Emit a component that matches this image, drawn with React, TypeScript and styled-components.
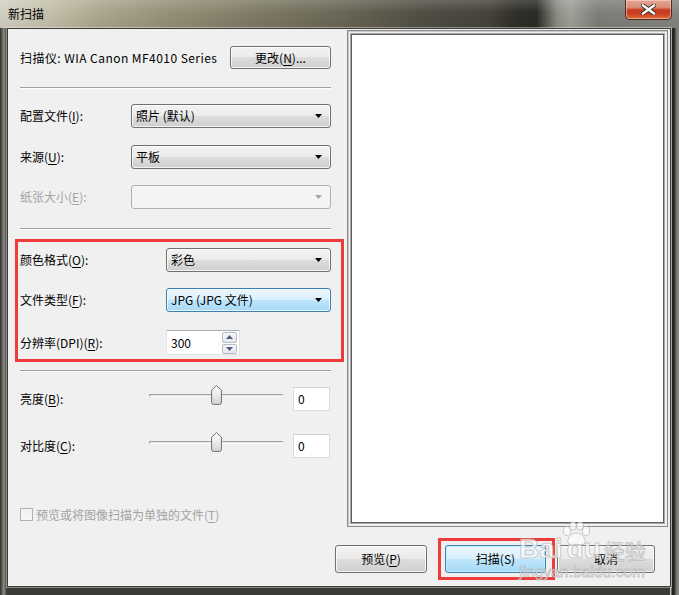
import React from "react";
import styled, { createGlobalStyle, css } from "styled-components";

const Global = createGlobalStyle`
  html, body { margin: 0; padding: 0; background: #ffffff; }
  body {
    font-family: "Noto Sans CJK SC", "Noto Sans", sans-serif;
    font-size: 12px;
    line-height: 16px;
    color: #000;
  }
  * { box-sizing: border-box; }
  u { text-decoration: underline; text-underline-offset: 2px; }
`;

const Window = styled.div`
  position: relative;
  width: 679px;
  height: 595px;
  display: flex;
  flex-direction: column;
  padding: 0 8px 8px 7px;
  overflow: hidden;
  background:
    linear-gradient(90deg, #2c2c29 0px, #5f5e59 2px, #8d8c86 4px, #6c6b66 5px, #3a3935 7px) left top / 7px 100% no-repeat,
    linear-gradient(90deg, #d0d0cd 0px, #b5b5b2 1px, #262624 2px, #1c1c1a 4px, #6d6d6a 6px, #8e8e8b 9px) right top / 9px 100% no-repeat,
    linear-gradient(180deg, #5a5955 0%, #3b3a36 100%);
`;

const TitleBar = styled.div`
  height: 28px;
  margin: 0 -8px 0 -7px;
  padding: 0 7px 0 8px;
  display: flex;
  justify-content: space-between;
  align-items: flex-start;
  flex: none;
  background:
    linear-gradient(180deg, rgba(255, 255, 255, 0.16) 0%, rgba(255, 255, 255, 0) 45%, rgba(0, 0, 0, 0.05) 100%),
    linear-gradient(90deg, #d3d0c2 0%, #c4c0ab 7%, #aba58d 15%, #948f77 25%, #7a7662 40%, #6b6756 50%, #514e44 62%, #45433a 72%, #2f2e28 76%, #2b2a25 79%, #8c8b84 82%, #a09f99 84%, #7e7d78 88%, #848480 100%);
`;

const Title = styled.span`
  margin-top: 6px;
  font-size: 12px;
  line-height: 16px;
  color: #000;
`;

const CloseButton = styled.div`
  width: 47px;
  height: 20px;
  display: flex;
  align-items: center;
  justify-content: center;
  border: 1px solid #4a2a22;
  border-top: none;
  border-radius: 0 0 5px 5px;
  background: linear-gradient(180deg, #e2a796 0%, #d88a74 40%, #c53c20 52%, #c8401f 72%, #e46a3a 100%);
  box-shadow: inset 0 0 0 1px rgba(255, 220, 200, 0.55);
`;

const Client = styled.div`
  flex: 1;
  display: flex;
  flex-direction: column;
  background: #f0f0f0;
  border: 1px solid #3a3a37;
  box-shadow: 0 0 0 1px rgba(255, 255, 255, 0.4);
`;

const Top = styled.div`
  display: flex;
  padding-top: 1px;
  height: 498px;
  flex: none;
`;

const LeftPanel = styled.div`
  width: 339px;
  flex: none;
  display: flex;
  flex-direction: column;
  padding: 0 16px 0 12px;
`;

const Row = styled.div<{ $mt: number; $h?: number }>`
  display: flex;
  align-items: center;
  margin-top: ${(p) => p.$mt}px;
  height: ${(p) => p.$h ?? 24}px;
  flex: none;
`;

const ScannerRow = styled(Row)`
  justify-content: space-between;
`;

const Label = styled.span<{ $w?: number; $disabled?: boolean }>`
  width: ${(p) => (p.$w ? `${p.$w}px` : "auto")};
  flex: none;
  white-space: nowrap;
  color: ${(p) => (p.$disabled ? "#a3a3a3" : "#000")};
`;

const ScannerLabel = styled(Label)`
  letter-spacing: 0.45px;
`;

const Separator = styled.div<{ $mt: number }>`
  margin-top: ${(p) => p.$mt}px;
  height: 2px;
  flex: none;
  border-top: 1px solid #a0a0a0;
  border-bottom: 1px solid #ffffff;
`;

const Highlight = styled.div`
  margin: 9px -13px 0 -5px;
  padding: 6px 10px 4px 2px;
  border: 3px solid #f03b3b;
  display: flex;
  flex-direction: column;
`;

const buttonBase = css`
  display: flex;
  align-items: center;
  justify-content: center;
  flex: none;
  border: 1px solid #707070;
  border-radius: 3px;
  background: linear-gradient(180deg, #f2f2f2 0%, #ebebeb 49%, #dddddd 50%, #cfcfcf 100%);
  box-shadow: inset 0 0 0 1px rgba(255, 255, 255, 0.75);
  color: #000;
  white-space: nowrap;
`;

const Button = styled.div<{ $w: number; $h: number; $default?: boolean }>`
  ${buttonBase};
  width: ${(p) => p.$w}px;
  height: ${(p) => p.$h}px;
  ${(p) =>
    p.$default &&
    css`
      border-color: #3c7fb1;
      background: linear-gradient(180deg, #eaf6fd 0%, #d9f0fc 49%, #bee6fd 50%, #a7d9f5 100%);
      box-shadow: inset 0 0 0 1px rgba(200, 238, 255, 0.9);
    `}
`;

type Variant = "normal" | "hot" | "disabled";

const ComboBox = styled.div<{ $variant: Variant }>`
  ${buttonBase};
  flex: 1;
  height: 24px;
  justify-content: space-between;
  padding: 0 8px 0 4px;
  ${(p) =>
    p.$variant === "hot" &&
    css`
      border-color: #3c7fb1;
      background: linear-gradient(180deg, #eaf6fd 0%, #d9f0fc 49%, #bee6fd 50%, #a7d9f5 100%);
    `}
  ${(p) =>
    p.$variant === "disabled" &&
    css`
      border-color: #adb2b5;
      background: #f4f4f4;
      box-shadow: none;
    `}
`;

const Combo: React.FC<{ value?: string; variant?: Variant }> = ({ value, variant = "normal" }) => (
  <ComboBox $variant={variant}>
    <span>{value}</span>
    <svg width="7" height="4" viewBox="0 0 7 4">
      <path d="M0 0 H7 L3.5 4 Z" fill={variant === "disabled" ? "#a5a5a5" : "#000"} />
    </svg>
  </ComboBox>
);

const Spinner = styled.div`
  width: 74px;
  height: 25px;
  flex: none;
  display: flex;
  align-items: center;
  background: #fff;
  border: 1px solid #e2e3ea;
  border-top-color: #abadb3;
  padding: 0 2px 0 4px;
`;

const SpinValue = styled.span`
  flex: 1;
`;

const SpinButtons = styled.div`
  width: 15px;
  display: flex;
  flex-direction: column;
  gap: 1px;
`;

const SpinButton = styled.div<{ $h: number }>`
  height: ${(p) => p.$h}px;
  display: flex;
  align-items: center;
  justify-content: center;
  border: 1px solid #b6bcc6;
  border-radius: 2px;
  background: linear-gradient(180deg, #f4f6f9 0%, #e3e8ef 100%);
`;

const SliderBox = styled.div`
  position: relative;
  width: 134px;
  height: 20px;
  flex: none;
  align-self: flex-start;
  margin-top: -2px;
  padding-top: 9px;
`;

const Track = styled.div`
  height: 3px;
  border-top: 1px solid #a2a2a2;
  border-left: 1px solid #a2a2a2;
  background: #e4e6e6;
  border-bottom: 1px solid #fafafa;
`;

const Thumb = styled.svg`
  position: absolute;
  top: 0;
`;

const ValueBox = styled.div`
  width: 37px;
  height: 24px;
  margin-left: 10px;
  flex: none;
  display: flex;
  align-items: center;
  padding-left: 4px;
  background: #fff;
  border: 1px solid #dadada;
  border-top-color: #cfcfcf;
`;

const CheckBox = styled.div`
  width: 13px;
  height: 13px;
  flex: none;
  border: 1px solid #b1b1b1;
  background: linear-gradient(180deg, #ececec, #f8f8f8);
  box-shadow: inset 0 0 0 1px #f6f6f6;
  margin-right: 3px;
`;

const PreviewOuter = styled.div`
  width: 321px;
  height: 497px;
  flex: none;
  padding: 3px;
  border: 1px solid #8a8a8a;
  box-shadow: inset 1px 1px 0 #c8c8c8;
  display: flex;
`;

const PreviewInner = styled.div`
  flex: 1;
  background: #fff;
  border: 1px solid #5e5e5e;
  box-shadow: 0 0 0 1px #a8a8a8;
`;

const ButtonRow = styled.div`
  flex: 1;
  display: flex;
  justify-content: flex-end;
  align-items: center;
  padding: 4px 15px 0 0;
`;

const ButtonHighlight = styled.div`
  margin: 0 2px 0 11px;
  padding: 4px 6px 4px 4px;
  border: 3px solid #f03b3b;
  display: flex;
`;

const Watermark = styled.div`
  position: absolute;
  left: 519px;
  top: 534px;
  pointer-events: none;
  display: flex;
  flex-direction: column;
  color: rgba(255, 255, 255, 0.7);
  -webkit-text-stroke: 1px rgba(170, 170, 170, 0.6);
  font-family: "Liberation Sans", Arial, sans-serif;
`;

const WatermarkLogo = styled.div`
  position: relative;
  display: flex;
  align-items: flex-end;
  height: 30px;
  font-size: 28px;
  line-height: 30px;
  font-weight: bold;
`;

const WatermarkDu = styled.span`
  margin-left: 4px;
`;

const WatermarkCjk = styled.span`
  font-family: "Noto Sans CJK SC", sans-serif;
  font-size: 21px;
  font-weight: normal;
  margin-left: 3px;
  line-height: 28px;
`;

const WatermarkPaw = styled.svg`
  position: absolute;
  left: 41px;
  top: -12px;
`;

const WatermarkUrl = styled.span`
  font-size: 15px;
  line-height: 16px;
  letter-spacing: 0.3px;
`;

const SliderRow: React.FC<{ label: React.ReactNode; mt: number; value: number }> = ({ label, mt, value }) => {
  const pos = ((value + 100) / 200) * 134 - 5.5;
  return (
    <Row $mt={mt}>
      <Label $w={129}>{label}</Label>
      <SliderBox>
        <Track />
        <Thumb width="11" height="20" viewBox="0 0 11 20" style={{ left: pos }}>
          <defs>
            <linearGradient id="thumbGrad" x1="0" y1="0" x2="0" y2="1">
              <stop offset="0" stopColor="#fdfdfd" />
              <stop offset="0.45" stopColor="#eeeeee" />
              <stop offset="1" stopColor="#d2d2d2" />
            </linearGradient>
          </defs>
          <path
            d="M5.5 0.6 L10.4 5.2 L10.4 17.4 Q10.4 19.4 8.4 19.4 L2.6 19.4 Q0.6 19.4 0.6 17.4 L0.6 5.2 Z"
            fill="url(#thumbGrad)"
            stroke="#6f6f6f"
            strokeWidth="1"
            strokeLinejoin="round"
          />
        </Thumb>
      </SliderBox>
      <ValueBox>{String(value)}</ValueBox>
    </Row>
  );
};

export default function App() {
  return (
    <>
      <Global />
      <Window>
        <TitleBar>
          <Title>新扫描</Title>
          <CloseButton>
            <svg width="15" height="11" viewBox="0 0 15 11">
              <path d="M2 1.5 L13 9.5 M13 1.5 L2 9.5" stroke="#3a2a25" strokeWidth="4.2" strokeLinecap="square" />
              <path d="M2 1.5 L13 9.5 M13 1.5 L2 9.5" stroke="#ffffff" strokeWidth="2.4" strokeLinecap="square" />
            </svg>
          </CloseButton>
        </TitleBar>
        <Client>
          <Top>
            <LeftPanel>
              <ScannerRow $mt={16} $h={23}>
                <ScannerLabel>扫描仪: WIA Canon MF4010 Series</ScannerLabel>
                <Button $w={101} $h={23}>
                  更改(<u>N</u>)...
                </Button>
              </ScannerRow>
              <Separator $mt={18} />
              <Row $mt={15}>
                <Label $w={111}>
                  配置文件(<u>I</u>):
                </Label>
                <Combo value="照片 (默认)" />
              </Row>
              <Row $mt={17}>
                <Label $w={111}>
                  来源(<u>U</u>):
                </Label>
                <Combo value="平板" />
              </Row>
              <Row $mt={16}>
                <Label $w={111} $disabled>
                  纸张大小(<u>E</u>):
                </Label>
                <Combo variant="disabled" />
              </Row>
              <Separator $mt={19} />
              <Highlight>
                <Row $mt={0}>
                  <Label $w={146}>
                    颜色格式(<u>O</u>):
                  </Label>
                  <Combo value="彩色" />
                </Row>
                <Row $mt={16}>
                  <Label $w={146}>
                    文件类型(<u>F</u>):
                  </Label>
                  <Combo value="JPG (JPG 文件)" variant="hot" />
                </Row>
                <Row $mt={18} $h={25}>
                  <Label $w={146}>
                    分辨率(DPI)(<u>R</u>):
                  </Label>
                  <Spinner>
                    <SpinValue>300</SpinValue>
                    <SpinButtons>
                      <SpinButton $h={11}>
                        <svg width="7" height="4" viewBox="0 0 7 4">
                          <path d="M0 4 H7 L3.5 0 Z" fill="#4d5f80" />
                        </svg>
                      </SpinButton>
                      <SpinButton $h={10}>
                        <svg width="7" height="4" viewBox="0 0 7 4">
                          <path d="M0 0 H7 L3.5 4 Z" fill="#4d5f80" />
                        </svg>
                      </SpinButton>
                    </SpinButtons>
                  </Spinner>
                </Row>
              </Highlight>
              <Separator $mt={8} />
              <SliderRow
                mt={15}
                value={0}
                label={
                  <>
                    亮度(<u>B</u>):
                  </>
                }
              />
              <SliderRow
                mt={23}
                value={0}
                label={
                  <>
                    对比度(<u>C</u>):
                  </>
                }
              />
              <Row $mt={50} $h={13}>
                <CheckBox />
                <Label $disabled>
                  预览或将图像扫描为单独的文件(<u>T</u>)
                </Label>
              </Row>
            </LeftPanel>
            <PreviewOuter>
              <PreviewInner />
            </PreviewOuter>
          </Top>
          <ButtonRow>
            <Button $w={92} $h={28}>
              预览(<u>P</u>)
            </Button>
            <ButtonHighlight>
              <Button $w={101} $h={28} $default>
                扫描(S)
              </Button>
            </ButtonHighlight>
            <Button $w={98} $h={28}>
              取消
            </Button>
          </ButtonRow>
        </Client>
        <Watermark>
          <WatermarkLogo>
            <span>Bai</span>
            <WatermarkDu>du</WatermarkDu>
            <WatermarkCjk>经验</WatermarkCjk>
            <WatermarkPaw width="32" height="24" viewBox="0 0 30 24">
              <g fill="rgba(255,255,255,0.7)" stroke="rgba(170,170,170,0.6)" strokeWidth="1">
                <ellipse cx="6" cy="9" rx="3.5" ry="4.5" />
                <ellipse cx="12" cy="4" rx="3.5" ry="4" />
                <ellipse cx="19" cy="4" rx="3.5" ry="4" />
                <ellipse cx="25" cy="9" rx="3.5" ry="4.5" />
                <path d="M15.5 11 C10 11 6 17 7 20.5 C8 23.5 12 22.5 15.5 22.5 C19 22.5 23 23.5 24 20.5 C25 17 21 11 15.5 11 Z" />
              </g>
            </WatermarkPaw>
          </WatermarkLogo>
          <WatermarkUrl>jingyan.baidu.com</WatermarkUrl>
        </Watermark>
      </Window>
    </>
  );
}
